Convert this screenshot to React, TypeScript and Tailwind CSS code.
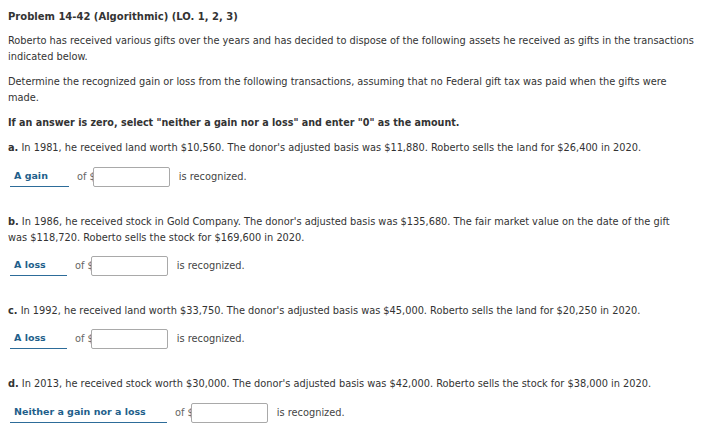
const body = "text-[#333] text-[9.8px] leading-[16px]";

function Answer({ label, width, top }: { label: string; width: string; top: string }) {
    return (
        <div className={`flex items-center h-[20px] ${top}`}>
            <div className={`${width} ml-[2px] h-[20px] border-b border-[#2d6c99] pl-[4px] flex items-center shrink-0`}>
                <span className="text-[9.5px] font-bold text-[#1f5f8b] whitespace-nowrap">{label}</span>
            </div>
            <span className="ml-[8px] text-[9.8px] text-[#666]">of $</span>
            <div className="-ml-[3px] w-[77px] h-[20px] border border-[#a9a9a9] rounded-[2px] bg-white" />
            <span className="ml-[9px] text-[9.8px] text-[#444]">is recognized.</span>
        </div>
    );
}

export default function App() {
    return (
        <div className="w-[702px] h-[445px] bg-white pl-[8px] pt-[9px]" style={{ fontFamily: '"DejaVu Sans", Verdana, sans-serif' }}>
            <div className="w-[694px]">
                <h1 className="text-[10px] font-bold leading-[16px] text-[#333]">Problem 14-42 (Algorithmic) (LO. 1, 2, 3)</h1>
                <p className={`${body} mt-[8px]`}>
                    Roberto has received various gifts over the years and has decided to dispose of the following assets he received as gifts in the transactions<br />indicated below.
                </p>
                <p className={`${body} mt-[9px]`}>
                    Determine the recognized gain or loss from the following transactions, assuming that no Federal gift tax was paid when the gifts were<br />made.
                </p>
                <p className="text-[#333] text-[9.6px] leading-[16px] mt-[9px] font-bold">If an answer is zero, select "neither a gain nor a loss" and enter "0" as the amount.</p>

                <p className={`${body} mt-[9px]`}>
                    <b>a.</b> In 1981, he received land worth $10,560. The donor's adjusted basis was $11,880. Roberto sells the land for $26,400 in 2020.
                </p>
                <Answer label="A gain" width="w-[59px]" top="mt-[11px]" />

                <p className={`${body} mt-[27px]`}>
                    <b>b.</b> In 1986, he received stock in Gold Company. The donor's adjusted basis was $135,680. The fair market value on the date of the gift<br />was $118,720. Roberto sells the stock for $169,600 in 2020.
                </p>
                <Answer label="A loss" width="w-[57px]" top="mt-[10px]" />

                <p className={`${body} mt-[27px]`}>
                    <b>c.</b> In 1992, he received land worth $33,750. The donor's adjusted basis was $45,000. Roberto sells the land for $20,250 in 2020.
                </p>
                <Answer label="A loss" width="w-[57px]" top="mt-[10px]" />

                <p className={`${body} mt-[27px]`}>
                    <b>d.</b> In 2013, he received stock worth $30,000. The donor's adjusted basis was $42,000. Roberto sells the stock for $38,000 in 2020.
                </p>
                <Answer label="Neither a gain nor a loss" width="w-[157px]" top="mt-[11px]" />
            </div>
        </div>
    );
}
